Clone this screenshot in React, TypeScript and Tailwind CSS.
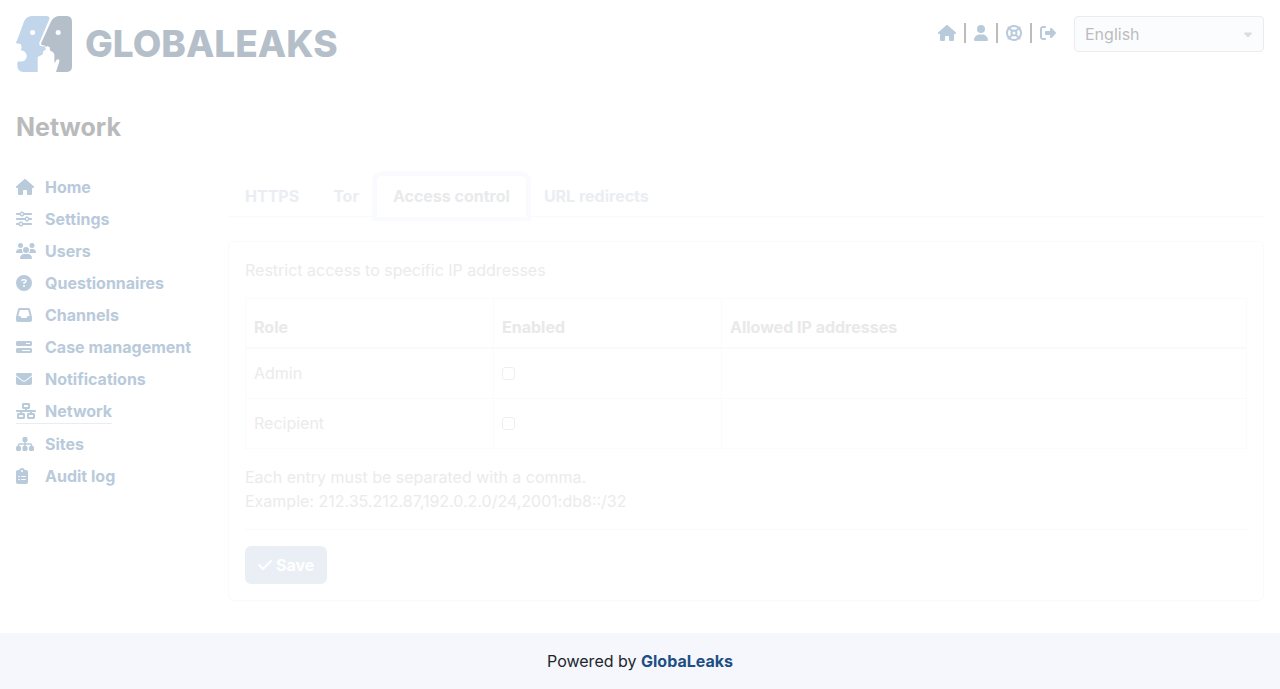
import type { IconType } from "react-icons";
import {
  FaBarsProgress,
  FaCaretDown,
  FaCheck,
  FaCircleQuestion,
  FaClipboardList,
  FaEnvelope,
  FaHouse,
  FaInbox,
  FaLifeRing,
  FaNetworkWired,
  FaRightFromBracket,
  FaSitemap,
  FaSliders,
  FaUser,
  FaUsers,
} from "react-icons/fa6";

type MenuItem = { label: string; icon: IconType; width: string; active?: boolean };

const menu: MenuItem[] = [
  { label: "Home", icon: FaHouse, width: "w-[18px]" },
  { label: "Settings", icon: FaSliders, width: "w-4" },
  { label: "Users", icon: FaUsers, width: "w-5" },
  { label: "Questionnaires", icon: FaCircleQuestion, width: "w-4" },
  { label: "Channels", icon: FaInbox, width: "w-4" },
  { label: "Case management", icon: FaBarsProgress, width: "w-4" },
  { label: "Notifications", icon: FaEnvelope, width: "w-4" },
  { label: "Network", icon: FaNetworkWired, width: "w-5", active: true },
  { label: "Sites", icon: FaSitemap, width: "w-[18px]" },
  { label: "Audit log", icon: FaClipboardList, width: "w-3" },
];

const tabs = ["HTTPS", "Tor", "Access control", "URL redirects"];
const roles = ["Admin", "Recipient"];

function Logo() {
  return (
    <a href="#home" aria-label="GlobaLeaks" className="flex items-center gap-[13px]">
      <svg viewBox="0 0 56 56" className="size-14" aria-hidden="true">
        <path
          fill="#c1d6ea"
          d="M15 0H30.5Q34.6 .4 33 4L23.4 26.5Q22.6 30 25.5 30.2H28.6L30 33.2L27 35.5L26.7 38.4L21.7 41V56H7.5Q1.3 55.5 1.3 49.5V47.3L2.3 45.3C7 46.5 10.7 44 10.7 40.2C10.7 36.5 8 34.6 4.8 34.6L5.6 31.5L4.8 28L1 27.6Q-.4 27 .3 25.8L1.6 23L8 5.5Q10 .8 15 0Z"
        />
        <path
          fill="#b5bfca"
          d="M43 0H51Q56 .4 56 5.5V50.5Q56 55.6 51 56H40L43.2 46Q44 43.5 42.2 43.2Q40.5 43 39.8 45.2L38.4 47V38.2Q37.5 35.8 34.2 34.8L33.6 31L31 30L30 31L28.2 29.3H26.2Q24.7 28.8 25.2 27L35 5.5Q37.5 .6 43 0Z"
        />
        <circle cx="16.6" cy="16.4" r="2.5" fill="#fff" />
        <circle cx="42.2" cy="16.4" r="2.5" fill="#fff" />
      </svg>
      <span className="text-[37px] leading-[56px] font-extrabold text-[#b5bfca]">GLOBALEAKS</span>
    </a>
  );
}

function Divider() {
  return <span aria-hidden="true" className="h-5 w-0.5 bg-[#bcbcbd]" />;
}

function Header() {
  return (
    <header className="flex items-start justify-between p-4">
      <Logo />
      <div className="flex items-start gap-[18px]">
        <nav aria-label="Account" className="flex h-[34px] items-center gap-2 text-[#b9cadb]">
          <a href="#home" aria-label="Home">
            <FaHouse className="h-4 w-[18px]" />
          </a>
          <Divider />
          <a href="#preferences" aria-label="Preferences">
            <FaUser className="h-4 w-3.5" />
          </a>
          <Divider />
          <a href="#support" aria-label="Support">
            <FaLifeRing className="size-4" />
          </a>
          <Divider />
          <a href="#logout" aria-label="Logout">
            <FaRightFromBracket className="size-4" />
          </a>
        </nav>
        <div className="relative">
          <select
            aria-label="Language"
            defaultValue="English"
            className="h-9 w-[190px] appearance-none rounded border border-[#ebecee] bg-[#fbfcfe] pr-8 pl-2.5 text-base text-[#bcbcbd]"
          >
            <option>English</option>
          </select>
          <FaCaretDown className="pointer-events-none absolute top-2.5 right-3 h-4 w-2 text-[#dcdcdc]" />
        </div>
      </div>
    </header>
  );
}

function Sidebar() {
  return (
    <nav aria-label="Administration" className="w-[196px] shrink-0">
      <ul className="flex flex-col items-start gap-2">
        {menu.map(({ label, icon: Icon, width, active }) => (
          <li key={label} className={active ? "border-b border-[#ececed]" : ""}>
            <a href="#menu" className="flex items-center font-bold text-[#b9cadb]">
              <span className="w-[29px]">
                <Icon className={`h-4 ${width}`} />
              </span>
              {label}
            </a>
          </li>
        ))}
      </ul>
    </nav>
  );
}

function Tabs() {
  return (
    <div role="tablist" className="flex border-b border-[#fafafb]">
      {tabs.map((tab) => (
        <button
          key={tab}
          type="button"
          role="tab"
          aria-selected={tab === "Access control"}
          className={
            tab === "Access control"
              ? "-mb-px rounded-t-md border border-[#fafafb] border-b-white bg-white px-4 py-2 font-bold text-[#e9eaeb] ring-4 ring-[#fafbff]"
              : "-mb-px border border-transparent px-4 py-2 font-bold text-[#eaeef3]"
          }
        >
          {tab}
        </button>
      ))}
    </div>
  );
}

function AccessControl() {
  return (
    <section className="mt-6 rounded-md border border-[#fafafa] p-4 text-[#ebebeb]">
      <p>Restrict access to specific IP addresses</p>
      <table className="mt-4 w-full table-fixed border-collapse border border-[#fbfbfb]">
        <thead>
          <tr className="border-b-2 border-[#fafafa] text-left text-[#e9e9e9]">
            <th className="w-[248px] border-r border-[#fbfbfb] px-2 pt-4 pb-2 font-bold">Role</th>
            <th className="w-[228px] border-r border-[#fbfbfb] px-2 pt-4 pb-2 font-bold">Enabled</th>
            <th className="px-2 pt-4 pb-2 font-bold">Allowed IP addresses</th>
          </tr>
        </thead>
        <tbody>
          {roles.map((role) => (
            <tr key={role} className="h-[50px] border-b border-[#fbfbfb]">
              <td className="border-r border-[#fbfbfb] px-2">{role}</td>
              <td className="border-r border-[#fbfbfb] px-2">
                <input
                  type="checkbox"
                  aria-label={`Enabled for ${role}`}
                  className="block size-[13px] appearance-none rounded-[3px] border border-[#efefef] bg-white"
                />
              </td>
              <td />
            </tr>
          ))}
        </tbody>
      </table>
      <p className="mt-4">
        Each entry must be separated with a comma.
        <br />
        Example: 212.35.212.87,192.0.2.0/24,2001:db8::/32
      </p>
      <hr className="my-4 border-[#fafafa]" />
      <button
        type="button"
        className="flex h-[38px] items-center gap-1 rounded-md bg-[#eaeff6] px-[13px] font-bold text-white"
      >
        <FaCheck className="h-4 w-3.5" />
        Save
      </button>
    </section>
  );
}

export default function App() {
  return (
    <div className="flex min-h-screen flex-col bg-white font-['Inter',sans-serif] text-base">
      <Header />
      <h1 className="mt-5 px-4 text-[25px] leading-[38px] font-bold text-[#b9babb]">Network</h1>
      <div className="mt-[29px] flex flex-1 items-start gap-4 px-4 pb-8">
        <Sidebar />
        <main className="min-w-0 flex-1">
          <Tabs />
          <AccessControl />
        </main>
      </div>
      <footer className="bg-[#f5f7fc] py-4 text-center text-[#212529]">
        Powered by{" "}
        <a href="#globaleaks" className="font-bold text-[#1d4f85]">
          GlobaLeaks
        </a>
      </footer>
    </div>
  );
}
